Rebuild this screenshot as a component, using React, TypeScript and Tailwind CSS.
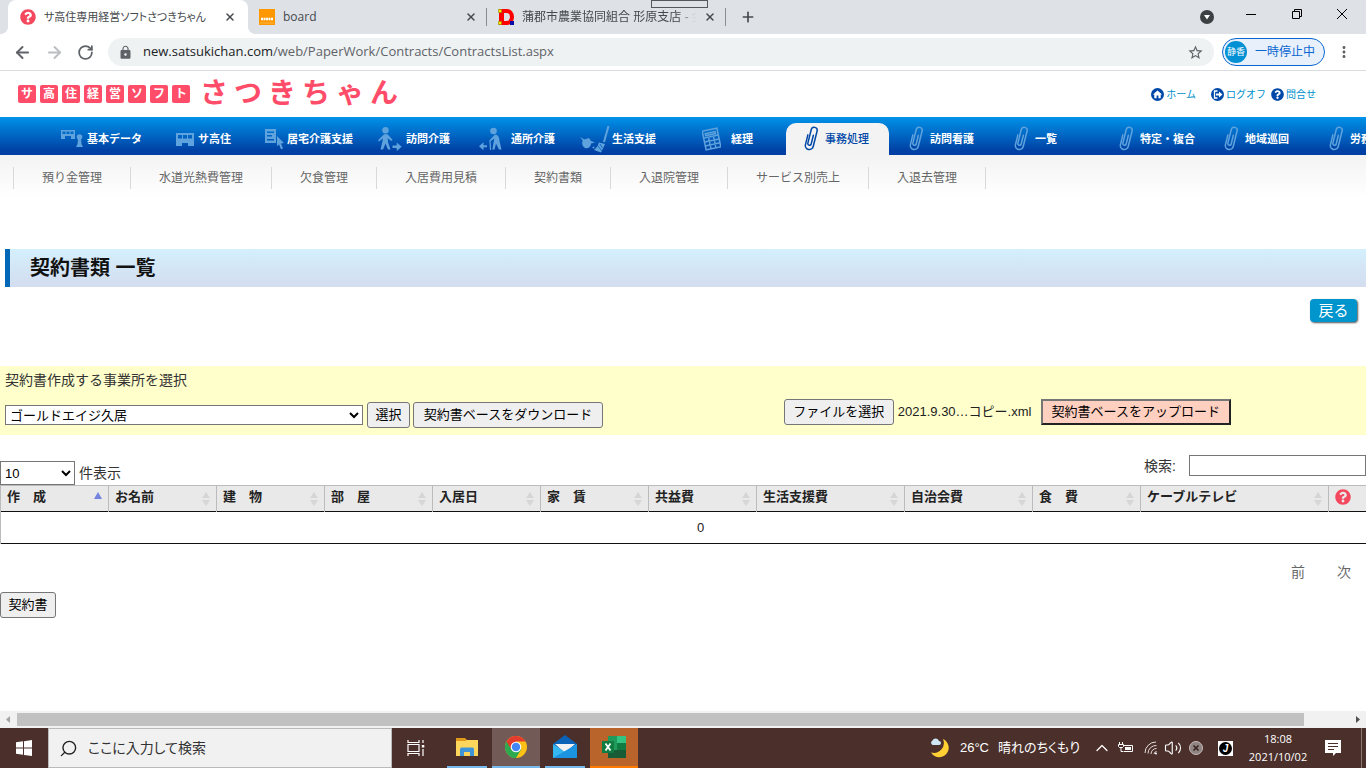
import { useState } from "react";
import type { ReactNode } from "react";
import {
  ArrowLeft,
  ArrowRight,
  ChevronUp,
  Plus,
  RotateCw,
  Search,
  Volume2,
  X,
} from "lucide-react";
import { FaQuestionCircle } from "react-icons/fa";
import { MdHome, MdLock, MdMoreVert, MdStarOutline } from "react-icons/md";

const logoTiles = ["サ", "高", "住", "経", "営", "ソ", "フ", "ト"];
const logoName = ["さ", "つ", "き", "ち", "ゃ", "ん"];

/* Menu icons */

function Clip() {
  return (
    <svg width="18" height="26" viewBox="0 0 18 26" fill="none" stroke="currentColor" strokeWidth="1.5" strokeLinecap="round">
      <path transform="rotate(14 9 13)" d="M4 10v10a4 4 0 0 0 8 0V4a3 3 0 0 0-6 0v14a1.700 1.700 0 0 0 3.400 0V9" />
    </svg>
  );
}

function BuildingPerson() {
  return (
    <svg width="22" height="18" viewBox="0 0 22 18" fill="currentColor">
      <path fillRule="evenodd" d="M0 0h14v9h-4V6H4v3H0zM1.500 1.500v2.500h3V1.500zm4 0v2.500h3V1.500zm4 0v2.500h3V1.500z" />
      <circle cx="18.500" cy="7" r="2.800" />
      <path d="M17 9h3l.5 5 1.500 3h-7l1.500-3z" />
    </svg>
  );
}

function Building() {
  return (
    <svg width="18" height="13" viewBox="0 0 18 13" fill="currentColor">
      <path fillRule="evenodd" d="M0 0h18v13h-6V10H6v3H0zM2 2v3.500h4V2zm5 0v3.500h4V2zm5 0v3.500h4V2z" />
    </svg>
  );
}

function DocCursor() {
  return (
    <svg width="20" height="22" viewBox="0 0 20 22" fill="currentColor">
      <path fillRule="evenodd" d="M0 1h11v14H0zM2 3.500v1.500h7V3.500zM2 7v1.500h5V7zM2 11v1.500h7V11z" />
      <path d="M12 8l7 7-3 .5 2 5-2 .8-2-5-2 2z" />
    </svg>
  );
}

function WalkOut() {
  return (
    <svg width="24" height="24" viewBox="0 0 24 24" fill="currentColor">
      <circle cx="7.500" cy="3.300" r="3.200" />
      <path d="M6 7.300h3.500l5 5.500-1 1.200-3.800-2.800.3 4L12.500 22.500H10L7.500 16.500 5 22.500H2.500l2-8 .3-3.300L1 14.500 0 13.300z" />
      <path d="M14.500 18.500h4.200v-3l5 4.200-5 4.300v-3h-4.200z" />
    </svg>
  );
}

function CaneWalk() {
  return (
    <svg width="24" height="24" viewBox="0 0 24 24" fill="currentColor">
      <path d="M8 18.200H4.500v-3L0 19.200l4.500 4v-3H8z" />
      <circle cx="14.500" cy="4" r="3.300" />
      <path d="M16 7.500c3 0 4.500 3 4.500 6.500l2 8.500h-2.500l-3-6-1.500 6h-2.200l1.500-8 .5-3-3.500 2.500-1-1z" />
      <path d="M11 13l.5 10" fill="none" stroke="currentColor" strokeWidth="1.200" />
    </svg>
  );
}

function Broom() {
  return (
    <svg width="30" height="28" viewBox="0 0 30 28" fill="currentColor">
      <path d="M0 12l4.500 2.500 4.500-1.500 2 3 4 1.500-4 1c0 3-2.500 5.500-6 4.500C2.500 21.500 1.500 18 2.800 15.500z" />
      <path d="M28.500 1L24 17" fill="none" stroke="currentColor" strokeWidth="2" />
      <path d="M19 17.500l6 1.500-1.500 3.500-2.500 5-7-2.500c2-2 4-4.500 5-7.500z" />
      <path d="M17 20l5 6M20 19l2.500 4" fill="none" stroke="#0058b8" strokeWidth=".8" />
      <circle cx="13.500" cy="22.500" r="1" />
    </svg>
  );
}

function Calculator() {
  return (
    <svg width="19" height="24" viewBox="0 0 19 24" fill="none" stroke="currentColor" strokeWidth="1.500">
      <g transform="rotate(-12 9.500 12)">
        <rect x="2" y="2.500" width="15" height="19" />
        <path d="M4.500 5.500h10v2h-10zM2 9.500h15M2 13.500h15M2 17.500h15M7 9.500v12M12 9.500v12" />
      </g>
    </svg>
  );
}

// slot is the width of the icon column, so every label starts where its icon ends
const mainMenu: { label: string; icon: ReactNode; slot: string; active?: boolean }[] = [
  { label: "基本データ", icon: <BuildingPerson />, slot: "w-9 pr-1" },
  { label: "サ高住", icon: <Building />, slot: "w-[42px] pr-1" },
  { label: "居宅介護支援", icon: <DocCursor />, slot: "w-[26px] pr-0.5" },
  { label: "訪問介護", icon: <WalkOut />, slot: "w-10 pr-1" },
  { label: "通所介護", icon: <CaneWalk />, slot: "w-10 pr-2" },
  { label: "生活支援", icon: <Broom />, slot: "w-9 pr-0.5" },
  { label: "経理", icon: <Calculator />, slot: "w-[50px] pr-2.5" },
  { label: "事務処理", icon: <Clip />, slot: "w-[39px] pr-1", active: true },
  { label: "訪問看護", icon: <Clip />, slot: "w-[39px] pr-1" },
  { label: "一覧", icon: <Clip />, slot: "w-[39px] pr-1" },
  { label: "特定・複合", icon: <Clip />, slot: "w-[39px] pr-1" },
  { label: "地域巡回", icon: <Clip />, slot: "w-[39px] pr-1" },
  { label: "労務", icon: <Clip />, slot: "w-[39px] pr-1" },
];

const subMenu = [
  "預り金管理",
  "水道光熱費管理",
  "欠食管理",
  "入居費用見積",
  "契約書類",
  "入退院管理",
  "サービス別売上",
  "入退去管理",
];

const columns = [
  { label: "作　成", width: "w-[108px]" },
  { label: "お名前", width: "w-[108px]" },
  { label: "建　物", width: "w-[108px]" },
  { label: "部　屋", width: "w-[108px]" },
  { label: "入居日", width: "w-[108px]" },
  { label: "家　賃", width: "w-[108px]" },
  { label: "共益費", width: "w-[108px]" },
  { label: "生活支援費", width: "w-[148px]" },
  { label: "自治会費", width: "w-[128px]" },
  { label: "食　費", width: "w-[108px]" },
  { label: "ケーブルテレビ", width: "w-[188px]" },
];

const plainButton =
  "h-[26px] shrink-0 whitespace-nowrap rounded-[3px] border border-[#767676] bg-[#efefef] px-1.5 text-[13px] text-black";

function BrowserTabs() {
  return (
    <div className="flex h-[34px] bg-[#dee1e6] pl-2 text-[#45494d]">
      <div className="relative flex w-60 items-center rounded-t-lg bg-white px-3">
        <span className="absolute bottom-0 -left-2 size-2 bg-[radial-gradient(circle_at_0_0,transparent_8px,white_8px)]" />
        <span className="absolute bottom-0 -right-2 size-2 bg-[radial-gradient(circle_at_100%_0,transparent_8px,white_8px)]" />
        <FaQuestionCircle size={16} className="shrink-0 text-[#f4485f]" />
        <span className="ml-2 flex-1 whitespace-nowrap text-[11px] [font-feature-settings:'palt']">
          サ高住専用経営ソフトさつきちゃん
        </span>
        <button aria-label="タブを閉じる">
          <X size={12} strokeWidth={3} />
        </button>
      </div>
      <div className="flex w-[238px] items-center pl-[11px] pr-[9px]">
        <svg width="16" height="16" viewBox="0 0 16 16" className="shrink-0">
          <rect width="16" height="16" fill="#ff9800" />
          <path d="M2 10h12" stroke="#fff" strokeWidth="2.500" strokeDasharray="2 .5" />
          <path d="M1 14h14" stroke="#ffc266" strokeWidth=".7" />
        </svg>
        <span className="ml-2 flex-1 font-['Open_Sans'] text-xs">board</span>
        <button aria-label="タブを閉じる">
          <X size={12} strokeWidth={3} />
        </button>
      </div>
      <div className="my-2 w-px bg-[#8a8d91]" />
      <div className="flex w-[238px] items-center pl-[11px] pr-[9px]">
        <svg width="16" height="16" viewBox="0 0 16 16" className="shrink-0">
          <path fill="red" fillRule="evenodd" d="M1 0h8a7 8 0 0 1 0 16H1zM6 4v8h2.500a3.500 4 0 0 0 0-8z" />
          <path fill="#ffeb00" stroke="#998a00" strokeWidth=".7" d="M.5.500h3v3h-3zM.5 12.500h3v3h-3z" />
          <path fill="#0a0aa8" d="M12 12h4v4h-4z" />
        </svg>
        <span className="ml-2 flex-1 overflow-hidden whitespace-nowrap text-xs mask-r-from-90%">
          蒲郡市農業協同組合 形原支店 - 金
        </span>
        <button className="ml-2" aria-label="タブを閉じる">
          <X size={12} strokeWidth={3} />
        </button>
      </div>
      <div className="my-2 w-px bg-[#8a8d91]" />
      <button className="ml-[14px]" aria-label="新しいタブ">
        <Plus size={16} strokeWidth={2.5} />
      </button>
      <div className="ml-auto flex items-center text-black">
        <svg width="14" height="14" viewBox="0 0 14 14" className="mr-8">
          <circle cx="7" cy="7" r="7" fill="#3c4043" />
          <path d="M4 5h6L7 9.500z" fill="#fff" />
        </svg>
        <svg width="102" height="12" viewBox="0 0 102 12" fill="none" stroke="currentColor" className="mr-[18px] mb-1.5">
          <path d="M0 6.500h10M46.500 3.500h7v7h-7zM48.500 3.500v-2h7v7h-2M91 1l10 10M101 1L91 11" />
        </svg>
      </div>
    </div>
  );
}

function Toolbar() {
  return (
    <div className="flex h-[37px] items-center border-b border-[#dadce0] pl-[13px] pr-[13px] text-[#5f6368]">
      <button aria-label="戻る">
        <ArrowLeft size={19} strokeWidth={2.5} />
      </button>
      <button aria-label="進む" className="ml-[13px] text-[#bcbec1]">
        <ArrowRight size={19} strokeWidth={2.5} />
      </button>
      <button aria-label="再読み込み" className="ml-[13px]">
        <RotateCw size={17} strokeWidth={2.5} />
      </button>
      <div className="ml-[14px] flex h-7 flex-1 items-center rounded-full bg-[#eef2f3] px-2.5">
        <MdLock size={15} />
        <span className="ml-2.5 flex-1 font-['Open_Sans'] text-[13px]">
          <span className="text-[#202124]">new.satsukichan.com</span>/web/PaperWork/Contracts/ContractsList.aspx
        </span>
        <MdStarOutline size={17} />
      </div>
      <button className="ml-2 flex h-7 items-center rounded-full border border-[#0b67d0] bg-[#e8f0fc] pl-0.5 pr-[9px] text-xs text-[#0b67d0]">
        <span className="mr-2 flex size-[22px] items-center justify-center rounded-full bg-[#0290d4] text-[9px] text-white">
          静香
        </span>
        一時停止中
      </button>
      <button aria-label="メニュー" className="ml-2.5">
        <MdMoreVert size={18} />
      </button>
    </div>
  );
}

function SiteHeader() {
  return (
    <header>
      <div className="flex h-[46px] items-center pl-[18px] pr-[50px]">
        <a href="#" className="flex items-center text-[#ff4d69]">
          <span className="flex gap-1">
            {logoTiles.map((c) => (
              <span key={c} className="flex size-[18px] items-center justify-center rounded-xs bg-[#ff4d69] text-xs font-bold text-white">
                {c}
              </span>
            ))}
          </span>
          <span className="ml-[10px] flex h-8 items-center gap-[6px] text-[28px] font-bold">
            {logoName.map((c) => (
              <span key={c}>{c}</span>
            ))}
          </span>
        </a>
        <div className="ml-auto flex items-center text-[10px] text-[#0090cc]">
          <a href="#" className="mr-[15px] flex items-center gap-0.5">
            <span className="flex size-[13px] items-center justify-center rounded-full bg-[#0048a8] text-white">
              <MdHome size={11} />
            </span>
            ホーム
          </a>
          <a href="#" className="mr-[5px] flex items-center gap-0.5">
            <svg width="13" height="13" viewBox="0 0 13 13">
              <circle cx="6.500" cy="6.500" r="6.500" fill="#0048a8" />
              <path d="M6.500 3h-3v7h3" fill="none" stroke="#fff" strokeWidth="1.300" />
              <path d="M5 5.500h3v-2l3.500 3-3.500 3v-2H5z" fill="#fff" />
            </svg>
            ログオフ
          </a>
          <a href="#" className="flex items-center gap-0.5">
            <FaQuestionCircle size={13} className="text-[#0048a8]" />
            問合せ
          </a>
        </div>
      </div>

      <nav className="flex h-[38px] items-end gap-0.5 overflow-hidden bg-linear-to-b from-[#0092e9] to-[#003fa3] to-90% pl-[51px]">
        {mainMenu.map((item) => (
          <a
            key={item.label}
            href="#"
            className={
              item.active
                ? "flex h-8 w-[103px] shrink-0 items-center whitespace-nowrap rounded-t-[10px] bg-[#f3f3f3] text-[11px] font-medium text-[#0048a8]"
                : "flex h-8 w-[103px] shrink-0 items-center whitespace-nowrap text-[11px] font-bold text-white"
            }
          >
            <span className={`flex shrink-0 justify-end ${item.slot} ${item.active ? "" : "text-[#5fa3de]"}`}>
              <span className="shrink-0">{item.icon}</span>
            </span>
            {item.label}
          </a>
        ))}
      </nav>

      <nav className="flex h-[42px] items-end bg-linear-to-b from-[#f3f3f3] to-white pb-2 pl-[13px]">
        <ul className="flex border-l border-[#d9d9d9]">
          {subMenu.map((label) => (
            <li key={label} className="border-r border-[#d9d9d9]">
              <a href="#" className="block px-7 text-xs leading-[22px] text-[#666]">
                {label}
              </a>
            </li>
          ))}
        </ul>
      </nav>
    </header>
  );
}

function BasePanel() {
  const [office, setOffice] = useState("ゴールドエイジ久居");

  return (
    <section className="mt-11 h-[69px] bg-[#ffffcc] pl-[5px] pt-1">
      <label htmlFor="office" className="block text-sm text-[#333]">
        契約書作成する事業所を選択
      </label>
      <div className="mt-2 flex">
        <div className="flex w-[57%] items-center pt-1">
          <select
            id="office"
            value={office}
            onChange={(e) => setOffice(e.target.value)}
            className="h-5 w-[358px] border border-[#767676] bg-white text-[13px] text-black"
          >
            <option>ゴールドエイジ久居</option>
          </select>
          <button className={`ml-1 min-w-[43px] ${plainButton}`}>選択</button>
          <button className={`ml-[3px] min-w-[190px] ${plainButton}`}>契約書ベースをダウンロード</button>
        </div>
        <div className="flex items-center self-start pt-px pl-[3px]">
          <input id="base-file" type="file" className="sr-only" />
          <label htmlFor="base-file" className={`flex w-[110px] items-center justify-center ${plainButton}`}>
            ファイルを選択
          </label>
          <span className="ml-1 w-[143px] whitespace-nowrap text-[13px] text-[#222]">2021.9.30…コピー.xml</span>
          <button className="h-[26px] w-[190px] whitespace-nowrap border-2 border-[#767676] border-r-[#222] border-b-[#222] bg-[#ffcfbf] text-[13px] text-black">
            契約書ベースをアップロード
          </button>
        </div>
      </div>
    </section>
  );
}

function SortMark() {
  return (
    <svg width="8" height="14" viewBox="0 0 8 14" fill="#d6d6d6">
      <path d="M4 0l4 6H0zM0 8h8l-4 6z" />
    </svg>
  );
}

function ContractsTable() {
  return (
    <table className="w-[1400px] table-fixed border-collapse text-[13px] text-[#222]">
      <thead>
        <tr className="h-[26px] border-t border-b border-t-[#bbb] border-b-[#111] bg-[#e9e9e9]">
          {columns.map((col, i) => (
            <th key={col.label} className={`border-l border-[#bbb] p-0 font-bold ${col.width}`}>
              <div className="flex h-[25px] items-start justify-between px-1.5">
                <span className="leading-[22px] whitespace-nowrap">{col.label}</span>
                {i === 0 ? (
                  <svg width="8" height="7" viewBox="0 0 8 7" className="mt-1.5">
                    <path d="M4 0l4 7H0z" fill="#7383df" />
                  </svg>
                ) : (
                  <span className="pt-1.5">
                    <SortMark />
                  </span>
                )}
              </div>
            </th>
          ))}
          <th className="border-l border-[#bbb] p-0 pl-1.5 pb-1">
            <FaQuestionCircle size={16} className="text-[#f4485f]" />
          </th>
        </tr>
      </thead>
      <tbody>
        <tr className="h-8 border-b border-[#111]">
          <td colSpan={12} className="border-l border-[#bbb] p-0 text-center">
            0
          </td>
        </tr>
      </tbody>
    </table>
  );
}

function Taskbar() {
  return (
    <footer className="flex h-10 bg-[#4a2f2b] text-white">
      <button aria-label="スタート" className="flex w-12 items-center justify-center">
        <svg width="16" height="16" viewBox="0 0 16 16" fill="#fff">
          <path d="M0 2.300L7 1.300v6.300H0zM8 1.200L16 0v7.600H8zM0 8.500h7v6.300l-7-1zM8 8.500h8V16l-8-1.100z" />
        </svg>
      </button>
      <label className="flex w-[344px] items-center border border-[#b9b9b9] bg-[#f1f1f1] pl-[10px] text-[#222]">
        <Search size={19} strokeWidth={1.75} className="shrink-0 -scale-x-100" />
        <input
          aria-label="検索"
          placeholder="ここに入力して検索"
          className="ml-2.5 w-full bg-transparent text-sm outline-none placeholder:text-[#333] [font-feature-settings:'palt']"
        />
      </label>
      <button aria-label="タスクビュー" className="flex w-12 items-center justify-center">
        <svg width="18" height="16" viewBox="0 0 18 16" fill="none" stroke="#fff" strokeWidth="1.200">
          <path d="M1 0v2.500h11V0M1 4.500h11v7H1zM1 16v-2.500h11V16M16 0v3M16 9v7" />
          <path d="M14.800 5h2.500v2.500h-2.500z" fill="#fff" stroke="none" />
        </svg>
      </button>
      <button aria-label="エクスプローラー" className="ml-[7px] flex w-10 items-center justify-center border-b-2 border-[#76b9ed]">
        <svg width="22" height="20" viewBox="0 0 22 20">
          <path d="M0 1h9l2 2v4H0z" fill="#e09a1a" />
          <path d="M0 4h9l2-1h11v16H0z" fill="#ffd65c" />
          <path d="M4 19v-7a1.500 1.500 0 0 1 1.500-1.500h11A1.500 1.500 0 0 1 18 12v7h-4v-4H8v4z" fill="#3f95d8" />
        </svg>
      </button>
      <button aria-label="Chrome" className="ml-[5px] flex w-12 items-center justify-center border-b-2 border-[#76b9ed] bg-[#725a56]">
        <svg width="22" height="22" viewBox="0 0 24 24">
          <circle cx="12" cy="12" r="12" fill="#fbc116" />
          <path d="M12 12L1.600 6A12 12 0 0 0 12 24l6-10z" fill="#2da94f" />
          <path d="M1.600 6a12 12 0 0 1 20.800 0H12l-5 9z" fill="#e33b2e" />
          <circle cx="12" cy="12" r="5.800" fill="#fff" />
          <circle cx="12" cy="12" r="4.600" fill="#4285f4" />
        </svg>
      </button>
      <button aria-label="メール" className="ml-[5px] flex w-10 items-center justify-center border-b-2 border-[#76b9ed]">
        <svg width="24" height="24" viewBox="0 0 24 24">
          <path d="M0 9L12 0l12 9v5H0z" fill="#0b63b8" />
          <path d="M2 9h20l-10 9z" fill="#f2f2f2" />
          <path d="M0 9l12 8L24 9v14H0z" fill="#35b8f1" />
          <path d="M0 23L24 9v14z" fill="#1b93e0" />
        </svg>
      </button>
      <button aria-label="Excel" className="ml-[5px] flex w-12 items-center justify-center border-b-2 border-[#ff7a00] bg-[#b8642b]">
        <svg width="24" height="22" viewBox="0 0 24 22">
          <path d="M6 0h9v22H6z" fill="#1f9b5c" />
          <path d="M15 0h9v7h-9z" fill="#33c481" />
          <path d="M15 7h9v7h-9z" fill="#107c41" />
          <path d="M6 14h18v8H6z" fill="#185c37" />
          <path d="M0 5h12v12H0z" fill="#107c41" />
          <path d="M3.500 7.500l5 7M8.500 7.500l-5 7" stroke="#fff" strokeWidth="1.800" />
        </svg>
      </button>

      <div className="ml-auto flex items-center">
        <svg width="20" height="20" viewBox="0 0 20 20">
          <path d="M13 1a9.500 9.500 0 1 1-12 13.500A10 10 0 0 0 13 1z" fill="#ffcf33" />
          <path d="M2.500 7a2.500 2.500 0 0 1 0-4.500 3.500 3.500 0 0 1 6.500.5 2 2 0 0 1 0 4z" fill="#cfe6f7" />
        </svg>
        <span className="ml-2.5 w-[38px] text-[13px]">26°C</span>
        <span className="text-[13px] [font-feature-settings:'palt']">晴れのちくもり</span>
        <ChevronUp size={20} strokeWidth={1.5} className="ml-3" />
        <svg width="16" height="12" viewBox="0 0 16 12" fill="none" stroke="#fff" className="ml-1.5">
          <path d="M5.500 3.500h9v6h-9M1.500 0v2M4.500 0v2M.5 2.500h5v2l-1 1h-3l-1-1zM3 6v3.500h2" />
          <path d="M7 5h6v3H7z" fill="#fff" stroke="none" />
        </svg>
        <svg width="14" height="14" viewBox="0 0 14 14" fill="none" stroke="#e6dedd" className="ml-2.5">
          <path d="M1 12A11 11 0 0 1 12 1M4 12.500A8 8 0 0 1 12.500 4.500M7 13a5.500 5.500 0 0 1 5.500-5.500M10 13a3 3 0 0 1 2.500-2.500" />
          <circle cx="12" cy="12.500" r="1" fill="#fff" stroke="none" />
        </svg>
        <Volume2 size={18} strokeWidth={1.5} className="ml-1.5" />
        <svg width="16" height="16" viewBox="0 0 16 16" className="ml-1.5">
          <circle cx="8" cy="8" r="6.500" fill="#8f8482" stroke="#c5bebd" />
          <path d="M5.500 5.500l5 5M10.500 5.500l-5 5" stroke="#33201d" strokeWidth="1.500" />
        </svg>
        <span className="ml-[14px] flex size-[15px] items-center justify-center bg-white">
          <span className="flex size-[13px] items-center justify-center rounded-full bg-black text-[10px] font-bold text-white italic">
            J
          </span>
        </span>
        <span className="ml-2 w-[74px] text-center font-['Open_Sans'] text-[11px] leading-[18px]">
          18:08
          <br />
          2021/10/02
        </span>
        <svg width="16" height="16" viewBox="0 0 16 16" className="ml-2.5">
          <path d="M0 0h16v13h-5l-3 3v-3H0z" fill="#fff" />
          <path d="M3 3.500h10M3 6.500h10M3 9.500h6" stroke="#4a2f2b" />
        </svg>
        <div className="ml-5 mr-1 h-10 w-px bg-[#8a7572]" />
      </div>
    </footer>
  );
}

export default function App() {
  return (
    <div className="relative flex h-screen flex-col overflow-hidden bg-white font-['Liberation_Sans','Noto_Sans_CJK_JP',sans-serif]">
      <BrowserTabs />
      <Toolbar />
      <div className="absolute top-0 left-[651px] h-2 w-[57px] border border-[#55585c] bg-[#dee1e6]" />

      <div className="flex-1 overflow-hidden">
        <SiteHeader />
        <h1 className="mt-[52px] ml-[5px] border-l-[5px] border-[#0068b7] bg-linear-to-b from-[#d4effd] to-[#d3ddef] pl-5 text-xl leading-[38px] font-bold text-[#111]">
          契約書類 一覧
        </h1>
        <div className="mt-3 flex justify-end pr-[9px]">
          <button className="h-[23px] w-[47px] rounded-sm bg-[#0095cd] text-[15px] leading-[22px] text-white shadow-[1px_1px_2px_#555]">
            戻る
          </button>
        </div>

        <BasePanel />

        <div className="mt-5 flex h-[30px] items-start justify-between text-sm text-[#333]">
          <label className="flex items-center gap-1 pt-1.5">
            <select defaultValue="10" className="h-6 w-[75px] border border-[#767676] bg-white text-[13px] text-black">
              <option>10</option>
              <option>25</option>
            </select>
            件表示
          </label>
          <label className="flex items-center gap-[13px]">
            検索:
            <input type="search" className="h-[21px] w-[177px] border border-[#767676] bg-white px-1 text-[13px]" />
          </label>
        </div>
        <ContractsTable />

        <div className="mt-[18px] flex justify-end gap-8 pr-[15px] text-sm text-[#666]">
          <a href="#">前</a>
          <a href="#">次</a>
        </div>
        <button className={`mt-2.5 w-14 ${plainButton}`}>契約書</button>
      </div>

      {/* Horizontal scroll bar of the page */}
      <div className="flex h-[17px] items-center bg-[#f1f1f1]">
        <svg width="17" height="17" viewBox="0 0 17 17" fill="#a3a3a3">
          <path d="M10 5v7L6 8.500z" />
        </svg>
        <div className="mr-[45px] h-[13px] flex-1 bg-[#c1c1c1]" />
        <svg width="17" height="17" viewBox="0 0 17 17" fill="#505050">
          <path d="M7 5v7l4-3.500z" />
        </svg>
      </div>
      <Taskbar />
    </div>
  );
}
